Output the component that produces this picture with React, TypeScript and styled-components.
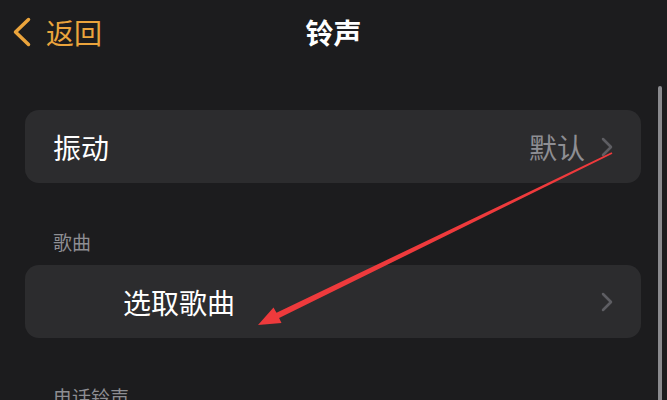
import styled, { createGlobalStyle } from 'styled-components';

const GlobalStyle = createGlobalStyle`
  html, body {
    margin: 0;
    padding: 0;
    background: #1c1c1e;
    font-family: "Noto Sans CJK SC", "Noto Sans", sans-serif;
  }
`;

const Screen = styled.div`
  position: relative;
  width: 667px;
  height: 400px;
  overflow: hidden;
  background: #1c1c1e;
`;

const NavBar = styled.div`
  height: 64px;
  display: grid;
  grid-template-columns: 1fr auto 1fr;
  align-items: center;
`;

const BackButton = styled.div`
  display: flex;
  align-items: center;
  gap: 14px;
  padding-left: 12px;
  color: #eba43c;
  font-size: 28px;
  line-height: 1;
`;

const Title = styled.div`
  color: #fff;
  font-size: 28px;
  font-weight: 700;
  line-height: 1;
`;

const Content = styled.div`
  padding: 46px 26px 0 25px;
  display: flex;
  flex-direction: column;
`;

const Card = styled.div`
  height: 73px;
  border-radius: 14px;
  background: #2c2c2e;
  display: flex;
  align-items: center;
  padding: 0 28px;
`;

const RowLabel = styled.div<{ $indent?: number }>`
  flex: 1;
  color: #fff;
  font-size: 28px;
  line-height: 1;
  padding-left: ${p => p.$indent ?? 0}px;
`;

const RowValue = styled.div`
  color: #8e8e93;
  font-size: 28px;
  line-height: 1;
  margin-right: 16px;
`;

const SectionHeader = styled.div`
  color: #8e8e93;
  font-size: 19px;
  line-height: 1;
  padding: 49px 0 0 28px;
  height: 33px;
`;

const ScrollBar = styled.div`
  position: absolute;
  left: 658px;
  top: 86px;
  width: 4px;
  height: 330px;
  border-radius: 2px;
  background: #8a8a8e;
`;

const Overlay = styled.svg`
  position: absolute;
  left: 0;
  top: 0;
  pointer-events: none;
`;

const Chevron = ({ color, w, h, sw }: { color: string; w: number; h: number; sw: number }) => (
  <svg width={w} height={h} viewBox={`0 0 ${w} ${h}`}>
    <polyline
      points={`${w - sw},${sw} ${sw},${h / 2} ${w - sw},${h - sw}`}
      fill="none"
      stroke={color}
      strokeWidth={sw}
      strokeLinecap="round"
      strokeLinejoin="round"
    />
  </svg>
);

const Disclosure = () => (
  <svg width="12" height="20" viewBox="0 0 12 20">
    <polyline points="2,2 10,10 2,18" fill="none" stroke="#5e5e63" strokeWidth="2.5" strokeLinecap="round" strokeLinejoin="round" />
  </svg>
);

const App = () => (
  <>
    <GlobalStyle />
    <Screen>
      <NavBar>
        <BackButton>
          <Chevron color="#eba43c" w={20} h={32} sw={3.5} />
          <span>返回</span>
        </BackButton>
        <Title>铃声</Title>
        <div />
      </NavBar>
      <Content>
        <Card>
          <RowLabel>振动</RowLabel>
          <RowValue>默认</RowValue>
          <Disclosure />
        </Card>
        <SectionHeader>歌曲</SectionHeader>
        <Card>
          <RowLabel $indent={70}>选取歌曲</RowLabel>
          <Disclosure />
        </Card>
        <SectionHeader>电话铃声</SectionHeader>
      </Content>
      <ScrollBar />
      <Overlay width="667" height="400" viewBox="0 0 667 400">
        <polygon
          points="612.4,153.7 611.6,152.3 276.5,312.7 273.5,307.5 258,325 281.5,323 279.1,318.1"
          fill="#ee3a3c"
        />
      </Overlay>
    </Screen>
  </>
);

export default App;
